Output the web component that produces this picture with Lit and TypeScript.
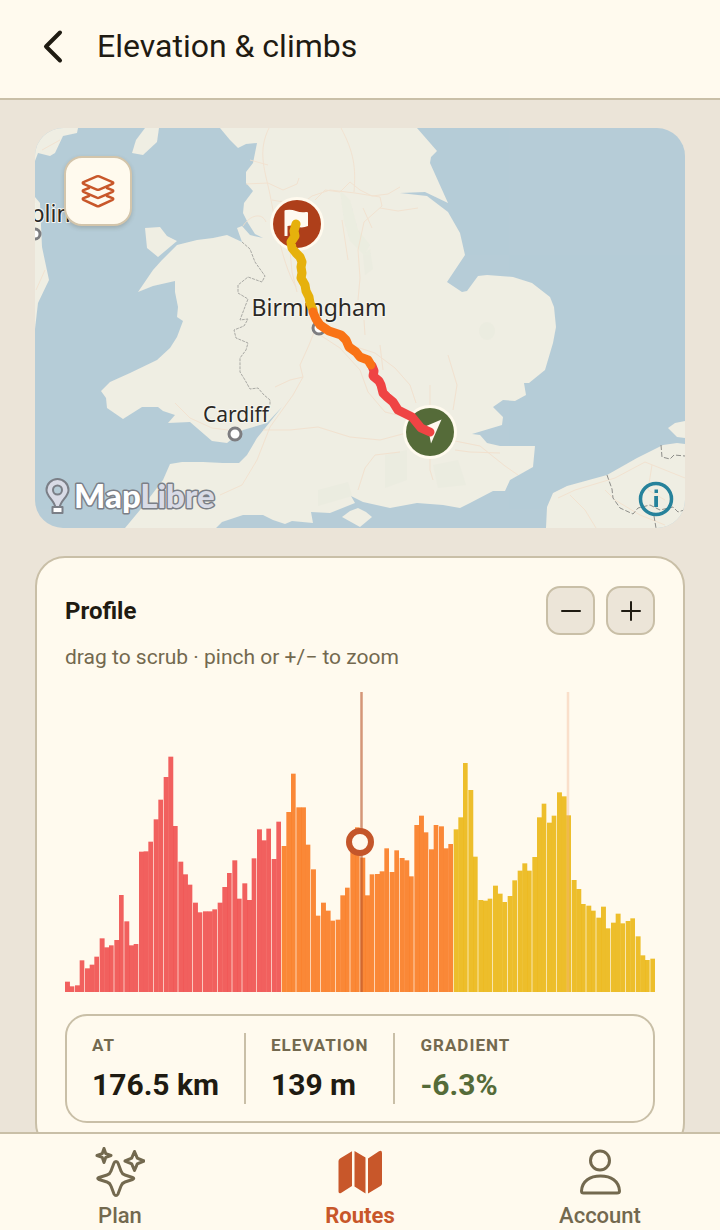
import { LitElement, css, html, svg } from 'lit'
import { customElement, property, state } from 'lit/decorators.js'
import { classMap } from 'lit/directives/class-map.js'

type Grade = "steep" | "medium" | "easy";

// bar heights, in chart units of 1/3 px
const PROFILE = [
  31, 17, 20, 95, 71, 82, 106, 161, 134, 140, 156, 291, 212, 140, 144,
  421, 422, 451, 518, 577, 645, 706, 498, 391, 353, 322, 268, 239, 242, 242,
  248, 268, 315, 357, 395, 280, 326, 276, 401, 488, 455, 490, 399, 511,
  438, 540, 655, 554, 554, 442, 368, 229, 268, 244, 214, 217, 290, 313,
  440, 494, 403, 290, 353, 354, 362, 431, 360, 425, 402, 395, 347, 501,
  529, 479, 428, 501, 497, 431, 444, 488, 524, 687, 606, 406, 276, 274,
  280, 319, 295, 270, 288, 335, 364, 386, 364, 405, 524, 565, 508, 529,
  599, 587, 530, 336, 309, 264, 259, 244, 223, 256, 191, 208, 235, 206,
  213, 221, 167, 110, 96, 100,
];

const gradeOf = (i: number): Grade => i < 44 ? "steep" : i < 79 ? "medium" : "easy";

@customElement("route-map")
export class RouteMap extends LitElement {
  render() {
    return html`
      <svg class="map" viewBox="35 128 650 400" role="img" aria-label="Route map">
        <rect class="sea" x="35" y="128" width="650" height="400" />
        <g class="land">
          <path d="M220 128L230 140L238 148L246 144L257 143L253 163L246 172V183L253 191L244 203L243 213L248 223L255 234L263 238L250 235L242 226L237 228L242 242L227 235L213 238L197 240L177 245L162 260L153 270L138 292L153 286L175 281V292L178 307L177 317L183 321L177 337L170 348L157 360L130 373L110 382L101 391L106 398L107 408L123 419L142 407H158L163 411L175 415L168 423L190 422L212 441L227 443L243 430L260 425L267 423L282 407L257 438L247 455L239 463H223L203 462L182 462L170 464L163 480L140 510L125 528H216L222 522L243 515L263 515L273 520L285 524L292 521L313 523L311 512L330 513L355 503L351 496L363 502L390 508L417 503L443 505L460 508L470 503L493 491H505L510 480L533 467L535 446H500L487 443L480 435L472 434L502 425L503 417L493 407L503 400L515 401L526 395L524 383H529L545 370L553 343L556 327L554 307L550 297L532 283L513 277L487 275L478 276L467 291L462 292L447 282L465 255L460 233L448 212L427 196L400 193L425 192L448 203L430 163L431 157L437 151L417 128Z" />
          <path d="M145 228L160 227L167 236L177 241L158 257L147 248Z" />
          <path d="M145 128H159L157 142L143 155L132 153L136 140Z" />
          <path d="M35 128H78L77 133L63 136L55 153L50 156L38 153L35 161Z" />
          <path d="M35 197L40 203L42 247L49 280L38 303L35 329Z" />
          <path d="M342 517L350 511L358 508L366 512L372 517L360 527Z" />
          <path d="M546 528L547 507L553 493L567 486L607 475L637 458L663 445L677 443L685 444V528Z" />
          <path d="M685 421L675 423L668 428L677 437L685 438Z" />
        </g>
        <g class="woods">
          <ellipse cx="487" cy="331" rx="8" ry="9" />
          <path d="M340 190l10 10 8 30 12 15-6 10-14-14-6-20zM363 255l7-6 3 20-8 6zM385 455l22-5v30l-22 8zM433 465l25-5 8 25-28 3zM318 490l30-8 4 14-34 10z" />
        </g>
        <g class="roads">
          <path d="M269 128C258 150 264 168 269 190S280 260 296 287M341 128C354 152 356 168 354 192M246 184L268 183L283 190L297 184L299 178M315 200L325 190L340 192L350 182L360 190L372 196L388 194L400 187M272 200L300 205L312 196L330 190L355 193L380 197L382 206L364 222L358 250L360 278L358 300M380 208L398 211L418 208M243 226C250 215 262 212 266 222M290 250L292 272L297 292" />
          <path d="M315 330L309 345L300 365L303 377L293 395L270 427L257 460L242 485L220 495M303 377L290 380L275 387M320 335L340 348L360 370L368 392L385 412L410 418M330 328L350 345L375 353L395 368L410 385L416 403M263 430L290 430L318 427L350 437L380 440L410 432M358 490L365 468L375 455L400 452M430 430L430 470L433 480M453 410L457 385L448 355M430 408L430 385M365 335L364 320M380 345L383 370M450 440L480 446L505 466L518 475M455 450L470 452L500 453" />
          <path d="M175 403L190 418L212 428L228 430M558 498L575 490L615 478L645 462L670 472L685 478M570 495L585 510L596 528M605 490L615 500L640 515L665 525M652 465L648 490L665 500M42 150L60 140M36 290L45 270M268 165L250 160M348 260L342 220M363 208L372 228" />
        </g>
        <path class="frontier" d="M242 242L250 249L255 262L265 276L262 282L248 277L238 285L238 293L248 299L243 312L240 320L248 319L244 326L234 330L236 338L248 343L246 350L240 358L240 372L245 380L250 389L258 388L264 395L270 400V405" />
        <path class="country" d="M661 445L662 457L670 459L674 455L685 456M607 475L612 489L613 498L620 508L633 514L638 508L650 505L660 510L673 507L678 512L684 510M654 516L656 528" />
        <text class="city" x="35" y="222" text-anchor="middle">Dublin</text>
        <circle class="dot" cx="35" cy="234" r="5" />
        <text class="city" x="319" y="316" text-anchor="middle">Birmingham</text>
        <circle class="dot" cx="319" cy="328" r="6" />
        <text class="city city-small" x="236" y="422" text-anchor="middle">Cardiff</text>
        <circle class="dot" cx="235" cy="434" r="6" />
        <g>
          <circle class="halo" cx="297" cy="224" r="27" />
          <circle class="finish" cx="297" cy="224" r="24" />
          <path class="glyph" d="M284.500 211Q284.500 210 286 210Q291 209 296 211Q301 213 306 212Q308 211.500 308 213V226Q302 228.500 297 226.500Q292 225 287.500 226V236H284.500Z" />
        </g>
        <g>
          <circle class="halo" cx="430" cy="432" r="27" />
          <circle class="start" cx="430" cy="432" r="24" />
          <path class="glyph" d="M441.500 419.500L418 429.500L429 433L431 443.500Z" />
        </g>
        <g class="route">
          <path class="easy" d="M296 224L294 231L295 236L291 242L292 248L296 253L300 257L302 262L301 267L302 273L301 278L305 285L306 291L309 297L310 303L313 310" />
          <path class="steep" d="M430 432L421 428L412 417L404 413L398 410L393 402L387 397L383 393L381 385L379 381L373 376L374 371L372 366" />
          <path class="medium" d="M313 312L316 319L320 325L329 331L341 335L346 340L349 347L356 352L360 357L368 360L371 365" />
        </g>
        <g class="brand">
          <path class="brand-pin" d="M57.500 479a11 11 0 0 0-11 11c0 7 8 10 9 18h4c1-8 9-11 9-18a11 11 0 0 0-11-11z" />
          <circle class="brand-eye" cx="57.500" cy="490" r="4.500" />
          <path class="brand-base" d="M52.500 507h10v6h-10z" />
          <text class="brand-name" x="74" y="508">Map<tspan class="brand-tail">Libre</tspan></text>
        </g>
      </svg>
      <button class="layers" aria-label="Map layers">
        <svg width="36" height="36" viewBox="0 0 36 36">
          <path d="M9 23L3.500 25.200Q2 26 3.500 26.800L16.800 33Q18 33.500 19.200 33L32.500 26.800Q34 26 32.500 25.200L27 23" />
          <path d="M9 15L3.500 17.200Q2 18 3.500 18.800L16.800 24.700Q18 25.200 19.200 24.700L32.500 18.800Q34 18 32.500 17.200L27 15" />
          <path d="M16.800 3.400Q18 2.900 19.200 3.400L32.500 9.200Q34 10 32.500 10.800L19.200 16.600Q18 17.100 16.800 16.600L3.500 10.800Q2 10 3.500 9.200Z" />
        </svg>
      </button>
      <button class="info" aria-label="Attribution">
        <svg width="36" height="36" viewBox="0 0 36 36">
          <circle cx="18" cy="18" r="15.500" />
          <path d="M16.500 8.500h3.500v3.500h-3.500zM16.200 15h3.800v11h-3.800z" />
        </svg>
      </button>
    `;
  }

  static styles = css`
    :host {
      display: block;
      position: relative;
      overflow: hidden;
      border-radius: 28px;
    }
    .map {
      display: block;
      width: 100%;
    }
    .sea { fill: #b6ccd7; }
    .land { fill: #efeee3; }
    .woods { fill: #e7eadd; opacity: 0.4; }
    .roads {
      fill: none;
      stroke: #f3dfcb;
      stroke-width: 1;
      stroke-linejoin: round;
      opacity: 0.8;
    }
    .frontier, .country {
      fill: none;
      stroke: #a9a9a4;
      stroke-width: 1;
      stroke-dasharray: 3 1;
    }
    .country {
      stroke: #8d8d89;
      stroke-dasharray: 5 2;
    }
    .city {
      fill: #2b2926;
      stroke: #f7f6f0;
      stroke-width: 2px;
      stroke-linejoin: round;
      paint-order: stroke;
      font: 23px "Noto Sans", sans-serif;
    }
    .city-small { font-size: 21px; }
    .dot {
      fill: #fff;
      stroke: #7d7d80;
      stroke-width: 3;
    }
    .halo { fill: var(--surface); }
    .finish { fill: #ae3f1a; }
    .start { fill: #556b39; }
    .glyph { fill: #fffaf0; }
    .route path {
      fill: none;
      stroke-width: 9;
      stroke-linecap: round;
      stroke-linejoin: round;
    }
    .route .steep { stroke: #ef4444; }
    .route .medium { stroke: #f97316; }
    .route .easy { stroke: #e6b10c; }
    .brand {
      stroke: #7b7f87;
      stroke-width: 2;
      stroke-linejoin: round;
    }
    .brand-pin { fill: #d9dbe6; }
    .brand-eye { fill: #b6ccd7; }
    .brand-base { fill: #fff; }
    .brand-name {
      fill: #fff;
      stroke-width: 3;
      paint-order: stroke;
      font: 900 33px Lato, sans-serif;
    }
    .brand-tail { fill: #d9dbe6; }
    button {
      display: grid;
      place-items: center;
      margin: 0;
      padding: 0;
      border: 0;
      background: none;
    }
    .layers {
      position: absolute;
      top: 28px;
      left: 29px;
      width: 68px;
      height: 70px;
      border: 2px solid #d3c5ab;
      border-radius: 18px;
      background: var(--surface);
      box-shadow: 0 2px 4px rgb(60 50 30 / 20%);
    }
    .layers path {
      fill: var(--surface);
      stroke: var(--accent);
      stroke-width: 2.5;
      stroke-linejoin: round;
      stroke-linecap: round;
    }
    .info {
      position: absolute;
      right: 11px;
      bottom: 11px;
    }
    .info circle {
      fill: none;
      stroke: #26829b;
      stroke-width: 3.5;
    }
    .info path { fill: #26829b; }
  `;
}

@customElement("elevation-profile")
export class ElevationProfile extends LitElement {
  @property({ type: Array })
  values: number[] = [];

  private bar(value: number, i: number) {
    // snapped to a 1.5x grid, so every few bars a hairline stays open
    const slot = (n: number) => Math.round(n * 7.375);
    const open = slot(i + 1) - slot(i) > 7;
    return svg`
      <rect
        class=${gradeOf(i)}
        x=${slot(i) / 1.5}
        y=${300 - value / 3}
        width=${(open ? 7 : 7.4) / 1.5}
        height=${value / 3}
      />
    `;
  }

  render() {
    return html`
      <svg viewBox="0 0 590 300" role="img" aria-label="Elevation profile">
        <g class="bars">${this.values.map((value, i) => this.bar(value, i))}</g>
        <line class="ghost" x1="503" x2="503" y1="0" y2="300" />
        <line class="cursor" x1="296.500" x2="296.500" y1="0" y2="300" />
        <circle class="thumb" cx="295" cy="150" r="11" />
      </svg>
    `;
  }

  static styles = css`
    :host { display: block; }
    svg {
      display: block;
      width: 100%;
    }
    rect { opacity: 0.85; }
    .steep { fill: #ef4444; }
    .medium { fill: #f97316; }
    .easy { fill: #eab308; }
    .cursor {
      stroke: #b9542a;
      stroke-width: 2.5;
      opacity: 0.6;
    }
    .ghost {
      stroke: #f3b08a;
      stroke-width: 2.5;
      opacity: 0.35;
    }
    .thumb {
      fill: var(--surface);
      stroke: #c4562a;
      stroke-width: 6;
    }
  `;
}

@customElement("app-root")
export class AppRoot extends LitElement {
  @state()
  private current = "Routes";

  private stats = [
    { label: "At", value: "176.5 km" },
    { label: "Elevation", value: "139 m" },
    { label: "Gradient", value: "-6.3%", descent: true },
  ];

  private tabs = [
    {
      label: "Plan",
      icon: svg`
        <path d="M21 14.500Q22.500 14.500 23 16L26 24Q27 27 30 28L37.500 30.500Q40 31.500 37.500 32.500L30 35Q27 36 26 39L23 47Q21 50 19 47L16 39Q15 36 12 35L4 32.500Q1.500 31.500 4 30.500L12 28Q15 27 16 24L19 16Q19.500 14.500 21 14.500Z" />
        <path d="M9 1.500L10.800 6.700L16 8.500L10.800 10.300L9 15.500L7.200 10.300L2 8.500L7.200 6.700Z" />
        <path d="M39.500 4.500L42.300 11.200L49 14L42.300 16.800L39.500 23.500L36.700 16.800L30 14L36.700 11.200Z" />
      `,
    },
    {
      label: "Routes",
      icon: svg`
        <path class="solid" d="M17 4.300V39L6 46Q3.500 47 3.500 44.500V14Q3.500 12.500 5 11.500ZM19.500 4L30.500 10.500V46.500L19.500 39.500ZM33 11.500L44 4.200Q47 3 47 6V36.500Q47 38 45.500 39L33 46.500Z" />
      `,
    },
    {
      label: "Account",
      icon: svg`
        <circle cx="25" cy="13.500" r="9.500" />
        <path d="M6.500 44Q6.500 46 8.500 46H42Q44.500 46 44.500 44C44 34 36 29 25.500 29S7 34 6.500 44Z" />
      `,
    },
  ];

  render() {
    return html`
      <header>
        <button class="back" aria-label="Back">
          <svg width="24" height="36" viewBox="0 0 24 36">
            <path d="M19 4.500L5 18.500L19 32.500" />
          </svg>
        </button>
        <h1>Elevation &amp; climbs</h1>
      </header>
      <main>
        <route-map></route-map>
        <section class="card">
          <div class="card-head">
            <h2>Profile</h2>
            <div class="zoom">
              <button aria-label="Zoom out">
                <svg width="24" height="24" viewBox="0 0 24 24"><path d="M3 12h18" /></svg>
              </button>
              <button aria-label="Zoom in">
                <svg width="24" height="24" viewBox="0 0 24 24"><path d="M3 12h18M12 3v18" /></svg>
              </button>
            </div>
          </div>
          <p class="hint">drag to scrub · pinch or +/− to zoom</p>
          <elevation-profile .values=${PROFILE}></elevation-profile>
          <dl class="stats">
            ${this.stats.map(({ label, value, descent }) => html`
              <div class="stat">
                <dt>${label}</dt>
                <dd class=${classMap({ descent: !!descent })}>${value}</dd>
              </div>
            `)}
          </dl>
        </section>
      </main>
      <nav>
        ${this.tabs.map(({ label, icon }) => html`
          <a
            href="#${label.toLowerCase()}"
            class=${classMap({ tab: true, active: label === this.current })}
            @click=${() => { this.current = label }}
          >
            <svg width="50" height="50" viewBox="0 0 50 50">${icon}</svg>
            <span>${label}</span>
          </a>
        `)}
      </nav>
    `;
  }

  static styles = css`
    :host {
      --surface: #fffaee;
      --base: #ebe4d8;
      --line: #c9bfa7;
      --ink: #1f1b12;
      --muted: #73694f;
      --accent: #c8572a;

      display: flex;
      flex-direction: column;
      height: 100vh;
      background: var(--base);
      color: var(--ink);
      font-family: Roboto, sans-serif;
    }
    h1, h2, p, dl, dd {
      margin: 0;
    }
    button {
      display: grid;
      place-items: center;
      margin: 0;
      padding: 0;
      border: 0;
      background: none;
    }
    header {
      display: flex;
      align-items: center;
      gap: 32px;
      padding: 24px 41px 30px;
      border-bottom: 2px solid var(--line);
      background: var(--surface);
    }
    h1 {
      font-size: 32px;
      font-weight: 400;
      line-height: 44px;
    }
    .back path {
      fill: none;
      stroke: var(--ink);
      stroke-width: 4;
      stroke-linecap: round;
      stroke-linejoin: round;
    }
    main {
      display: flex;
      flex: 1;
      flex-direction: column;
      gap: 28px;
      min-height: 0;
      padding: 28px 35px;
      overflow-y: auto;
      scrollbar-width: none;
    }
    main > * {
      flex: none;
    }
    .card {
      padding: 28px;
      border: 2px solid var(--line);
      border-radius: 30px;
      background: var(--surface);
    }
    .card-head {
      display: flex;
      align-items: center;
      justify-content: space-between;
    }
    h2 {
      font-size: 24px;
      font-weight: 700;
    }
    .zoom {
      display: flex;
      gap: 11px;
    }
    .zoom button {
      width: 49px;
      height: 49px;
      border: 2px solid var(--line);
      border-radius: 14px;
      background: #ece5d8;
    }
    .zoom path {
      stroke: var(--ink);
      stroke-width: 2;
      stroke-linecap: round;
    }
    .hint {
      margin: 8px 0 21px;
      color: var(--muted);
      font-size: 21px;
      line-height: 28px;
    }
    .stats {
      display: flex;
      margin-top: 22px;
      padding: 17px 0;
      border: 2px solid var(--line);
      border-radius: 22px;
    }
    .stat {
      padding: 0 25px;
    }
    .stat + .stat {
      border-left: 2px solid var(--line);
    }
    dt {
      color: var(--muted);
      font-size: 17px;
      font-weight: 700;
      letter-spacing: 1px;
      line-height: 24px;
      text-transform: uppercase;
    }
    dd {
      margin-top: 9px;
      font-size: 30px;
      font-weight: 700;
      line-height: 38px;
    }
    .descent {
      color: #556b39;
    }
    nav {
      display: grid;
      grid-template-columns: repeat(3, 1fr);
      padding: 13px 0 2px;
      border-top: 2px solid var(--line);
      background: var(--surface);
    }
    .tab {
      display: flex;
      flex-direction: column;
      align-items: center;
      gap: 7px;
      color: var(--muted);
      font-size: 22px;
      font-weight: 500;
      line-height: 24px;
      text-decoration: none;
    }
    .tab svg {
      fill: none;
      stroke: currentColor;
      stroke-width: 3;
      stroke-linejoin: round;
    }
    .tab .solid {
      fill: currentColor;
      stroke: none;
    }
    .active {
      color: var(--accent);
      font-weight: 700;
    }
  `;
}

declare global {
  interface HTMLElementTagNameMap {
    "app-root": AppRoot,
    "route-map": RouteMap,
    "elevation-profile": ElevationProfile,
  }
}
